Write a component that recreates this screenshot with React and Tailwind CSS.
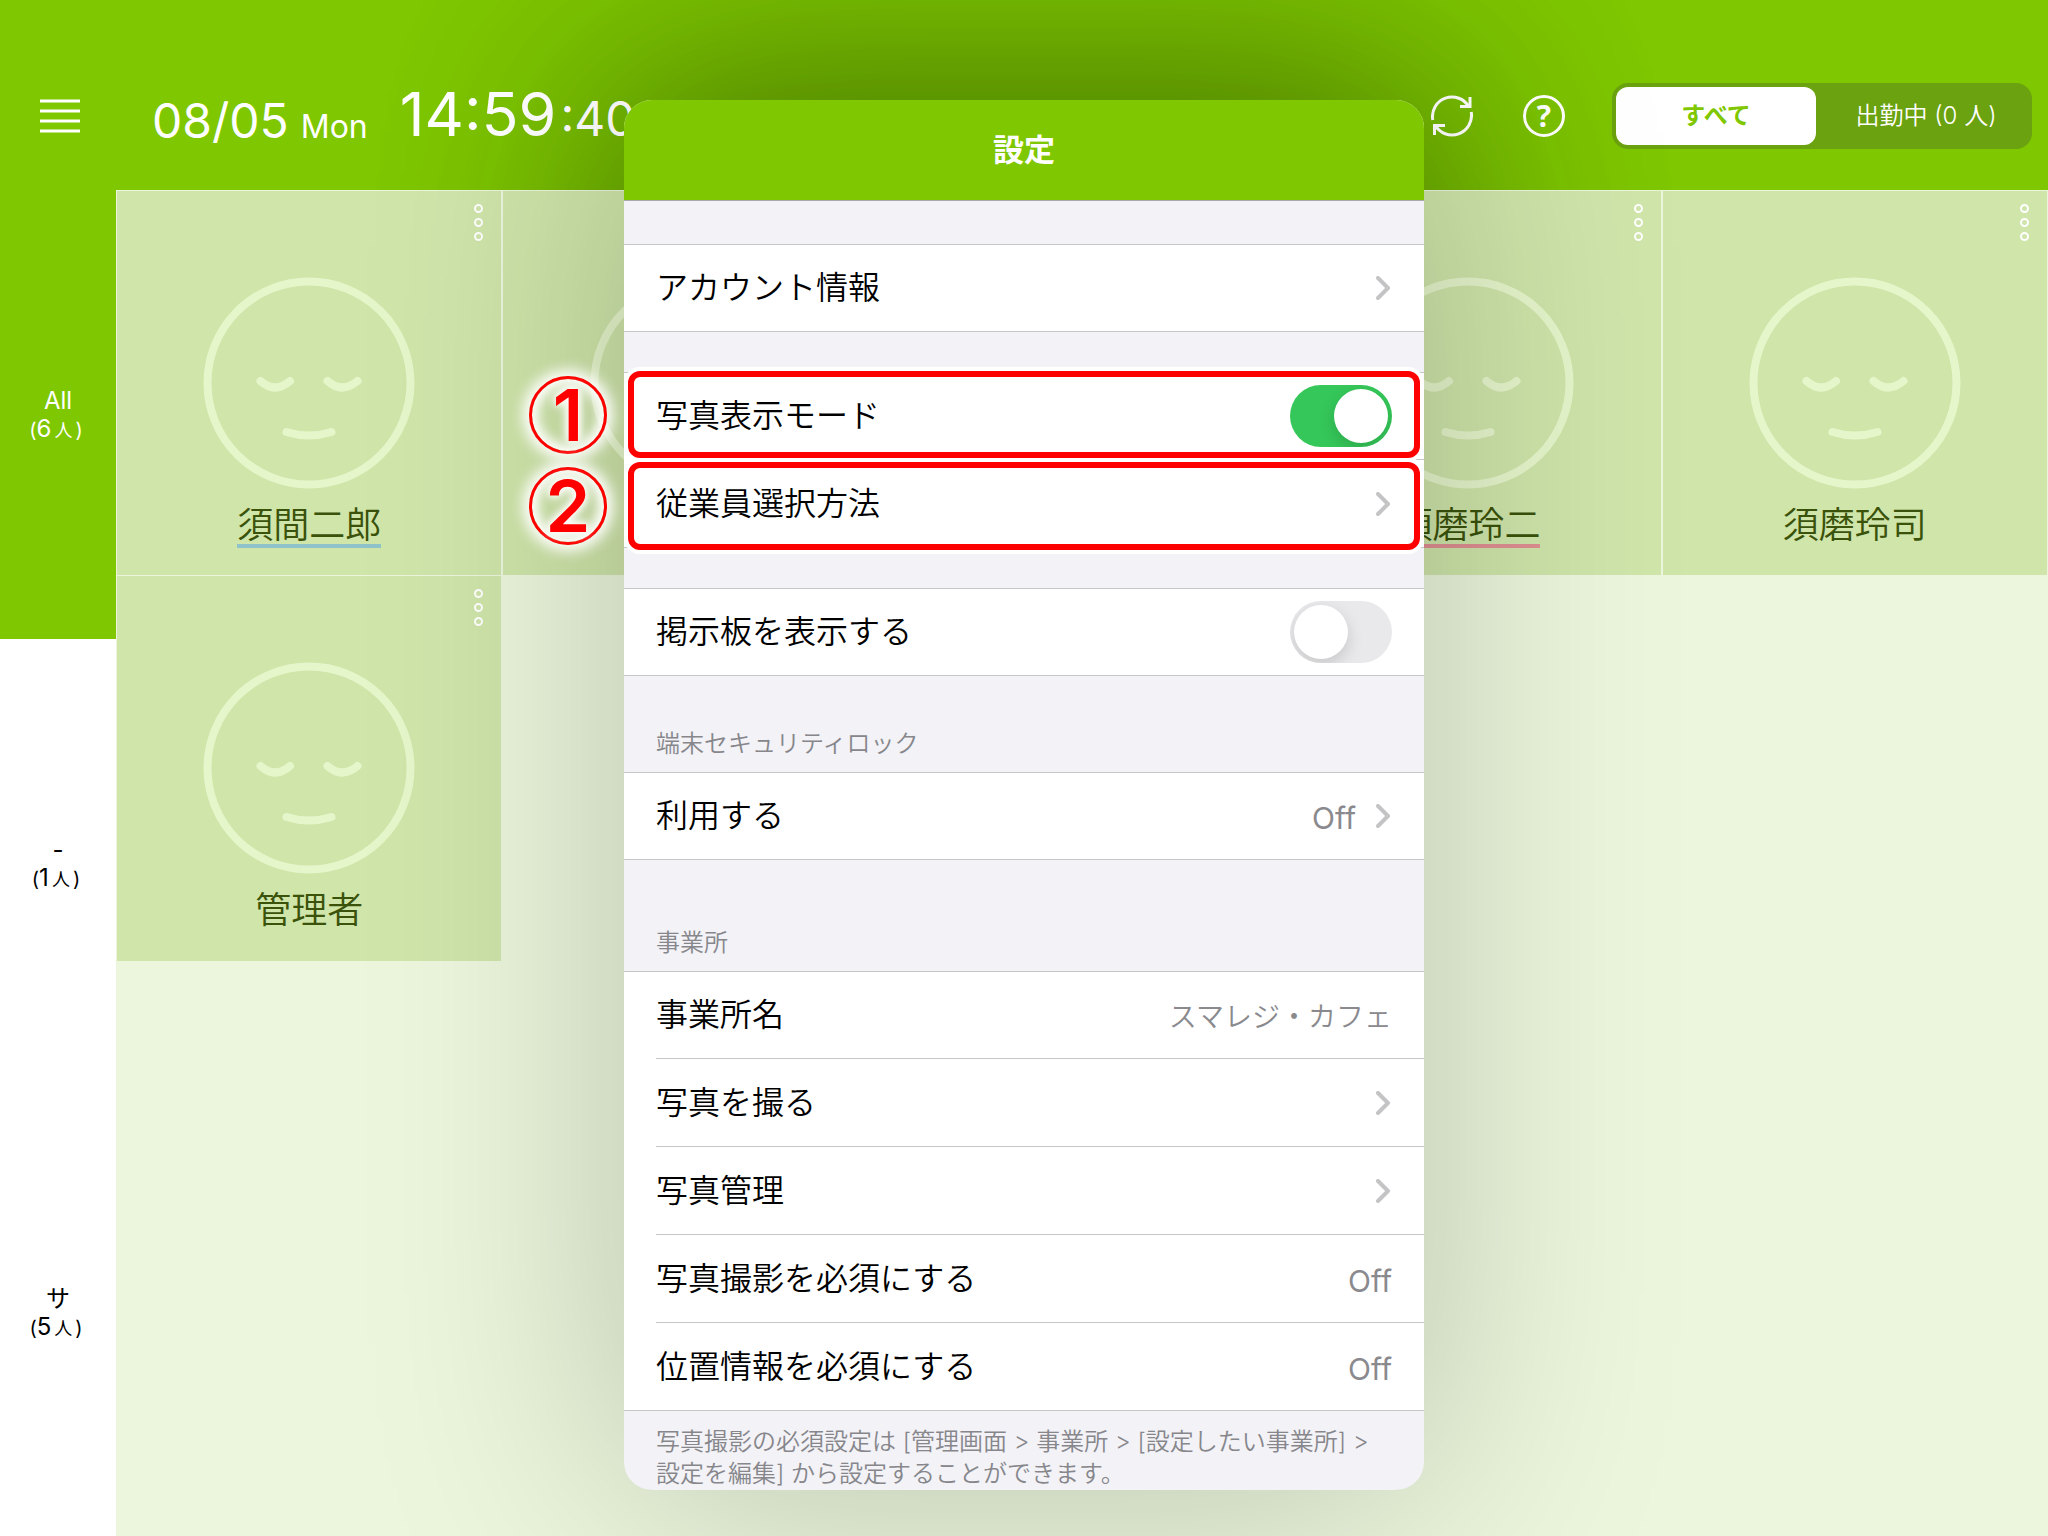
import clsx from "clsx";

const sidebarItems = [
  { label: "All", count: 6, active: true },
  { label: "-", count: 1 },
  { label: "サ", count: 5 },
];

const employees = [
  { name: "須間二郎", line: "border-[#8dc3c9]" },
  { name: "" },
  { name: "" },
  { name: "須磨玲二", line: "border-[#df8f91]" },
  { name: "須磨玲司" },
  { name: "管理者" },
];

const MenuIcon = () => (
  <svg viewBox="0 0 40 34" className="w-10" stroke="currentColor" strokeWidth="3">
    <path d="M0 2h40M0 12h40M0 22h40M0 32h40" />
  </svg>
);

const RefreshIcon = () => (
  <svg
    viewBox="0 0 42 42"
    className="w-[42px]"
    fill="none"
    stroke="currentColor"
    strokeWidth="3"
  >
    <path d="M1.8 25A19.500 19.500 0 0 1 38 12" />
    <path d="M40.200 17A19.500 19.500 0 0 1 4 30" />
    <path d="M39 2v9.500H29" />
    <path d="M3.500 40V30.500H14" />
  </svg>
);

const HelpIcon = () => (
  <span className="flex size-[42px] items-center justify-center rounded-full border-3 font-['Open_Sans',sans-serif] text-3xl font-bold">
    ?
  </span>
);

const Chevron = () => (
  <svg
    viewBox="0 0 16 24"
    className="h-6 w-4"
    fill="none"
    stroke="#c4c4c6"
    strokeWidth="4"
    strokeLinecap="round"
    strokeLinejoin="round"
  >
    <path d="M2 2l10 10L2 22" />
  </svg>
);

const Face = () => (
  <svg
    viewBox="-106 -106 212 212"
    className="w-[212px]"
    fill="none"
    stroke="#e6f6cb"
    strokeWidth="8"
    strokeLinecap="round"
  >
    <circle r="101.500" />
    <path d="M-48.500 -2Q-34 11 -19 -2M18.500 -2Q33 11 48.500 -2" />
    <path d="M-22.500 49Q0 56 22.500 49" />
  </svg>
);

const SidebarItem = ({ label, count, active }) => (
  <button
    className={clsx(
      "flex flex-1 flex-col items-center justify-center pt-1 text-2xl leading-[28px]",
      active ? "bg-[#7fc700] text-white" : "bg-white text-black"
    )}
  >
    <span>{label}</span>
    <span className="pr-1">
      <span className="text-xl">(</span>
      {count}
      <span className="px-[3px] text-lg">人</span>
      <span className="text-xl">)</span>
    </span>
  </button>
);

const EmployeeTile = ({ name, line }) => (
  <div className="relative flex aspect-square flex-col items-center bg-[#cfe5aa] pt-[86px]">
    <button
      aria-label="メニュー"
      className="absolute top-[13px] right-[18px] flex flex-col gap-[5px]"
    >
      <span className="size-[9px] rounded-full border-2 border-white" />
      <span className="size-[9px] rounded-full border-2 border-white" />
      <span className="size-[9px] rounded-full border-2 border-white" />
    </button>
    <Face />
    <span
      className={clsx(
        "mt-[18px] border-b-4 text-4xl leading-[37px] font-[350] text-[#3a5209]",
        line || "border-transparent"
      )}
    >
      {name}
    </span>
  </div>
);

const Header = () => (
  <header className="relative flex h-[190px] items-center overflow-hidden bg-[#7fc700] pt-[41px] pr-4 pl-10 text-white">
    <div className="absolute top-[100px] left-1/2 h-[1390px] w-[800px] -translate-x-1/2 rounded-[28px] shadow-[0_0_220px_24px_rgba(0,30,0,0.3)]" />
    <div className="relative flex w-full items-center">
      <button aria-label="メニュー">
        <MenuIcon />
      </button>
      <div className="ml-[72px] flex items-baseline gap-3 pt-[11px]">
        <span className="text-[48px] leading-[60px]">08/05</span>
        <span className="text-[32px]">Mon</span>
      </div>
      <div className="ml-8 flex items-baseline gap-1 pt-1">
        <span className="text-[61px] leading-[66px]">14:59</span>
        <span className="text-[48px]">:40</span>
      </div>
      <div className="ml-auto flex items-center">
        <button aria-label="更新">
          <RefreshIcon />
        </button>
        <button aria-label="ヘルプ" className="ml-[50px]">
          <HelpIcon />
        </button>
        <div className="ml-[47px] flex h-[66px] w-[420px] rounded-2xl bg-[#6ba20f] p-1 text-2xl">
          <button className="w-[200px] rounded-xl bg-white font-bold text-[#7fc700]">
            すべて
          </button>
          <button className="flex-1 pl-2 font-[350]">出勤中 (0 人)</button>
        </div>
      </div>
    </div>
  </header>
);

// numbered callout drawn around a row
const Callout = ({ number, className }) => (
  <div
    className={clsx(
      "pointer-events-none absolute inset-x-1 z-10 flex items-center rounded-xl border-6 border-[#ff0000] shadow-[0_0_0_4px_#fff,inset_0_0_2px_#fff]",
      className
    )}
  >
    <span className="absolute -left-[105px] flex size-[78px] items-center justify-center rounded-full border-3 border-[#ff0000] text-7xl font-semibold text-[#ff0000] shadow-[0_0_14px_6px_#fff,inset_0_0_12px_6px_#fff] [text-shadow:0_0_6px_#fff,0_0_12px_#fff,0_0_12px_#fff]">
      {number}
    </span>
  </div>
);

const Row = ({ children, callout }) => (
  <li className="group relative h-22 border-[#c6c6c8] bg-white pl-8 first:border-t last:border-b">
    <div className="h-full border-b border-[#c6c6c8] pr-8 group-last:border-b-0">
      {children}
    </div>
    {callout}
  </li>
);

const LinkRow = ({ label, value, callout }) => (
  <Row callout={callout}>
    <button className="flex h-full w-full items-center">
      <span>{label}</span>
      <span className="mt-1 mr-5 ml-auto text-3xl font-normal text-[#8a8a8e]">
        {value}
      </span>
      <Chevron />
    </button>
  </Row>
);

const ValueRow = ({ label, value }) => (
  <Row>
    <div className="flex h-full items-center justify-between">
      <span>{label}</span>
      <span
        className={clsx(
          "mt-1 text-[#8a8a8e]",
          value === "Off" ? "text-3xl font-normal" : "text-[28px]"
        )}
      >
        {value}
      </span>
    </div>
  </Row>
);

const SwitchRow = ({ label, checked, callout }) => (
  <Row callout={callout}>
    <label className="flex h-full items-center justify-between">
      {label}
      <input
        type="checkbox"
        role="switch"
        defaultChecked={checked}
        className="h-[62px] w-[102px] appearance-none overflow-hidden rounded-full bg-[#e9e9eb] p-1 before:block before:size-[54px] before:rounded-full before:bg-white before:shadow-[0_6px_16px_rgba(0,0,0,0.15)] checked:bg-[#35c759] checked:pl-11"
      />
    </label>
  </Row>
);

const SettingsModal = () => (
  <div
    role="dialog"
    aria-label="設定"
    className="w-[800px] rounded-[28px] bg-[#f2f2f7] text-[32px] font-[350] text-black shadow-[0_0_280px_rgba(0,0,0,0.22)]"
  >
    <h1 className="flex h-[101px] items-center justify-center rounded-t-[28px] border-b border-[#a9a9ad] bg-[#7fc700] text-[31px] font-bold text-white">
      設定
    </h1>
    <ul className="mt-[43px]">
      <LinkRow label="アカウント情報" />
    </ul>
    <ul className="mt-10">
      <SwitchRow
        label="写真表示モード"
        checked
        callout={<Callout number="1" className="-top-0.5 h-[87px]" />}
      />
      <LinkRow
        label="従業員選択方法"
        callout={<Callout number="2" className="top-0.5 h-[88px]" />}
      />
    </ul>
    <ul className="mt-10">
      <SwitchRow label="掲示板を表示する" />
    </ul>
    <h2 className="flex h-24 items-end px-8 pb-3 text-2xl text-[#86868b]">
      端末セキュリティロック
    </h2>
    <ul>
      <LinkRow label="利用する" value="Off" />
    </ul>
    <h2 className="flex h-[111px] items-end px-8 pb-3 text-2xl text-[#86868b]">
      事業所
    </h2>
    <ul>
      <ValueRow label="事業所名" value="スマレジ・カフェ" />
      <LinkRow label="写真を撮る" />
      <LinkRow label="写真管理" />
      <ValueRow label="写真撮影を必須にする" value="Off" />
      <ValueRow label="位置情報を必須にする" value="Off" />
    </ul>
    <p className="px-8 pt-[15px] text-2xl text-[#86868b]">
      写真撮影の必須設定は [管理画面 &gt; 事業所 &gt; [設定したい事業所] &gt;
      <br />
      設定を編集] から設定することができます。
    </p>
  </div>
);

export default function App() {
  return (
    <div className="relative flex min-h-screen flex-col overflow-hidden bg-[#ebf6dc] font-['Inter','Noto_Sans_CJK_JP',sans-serif]">
      <Header />
      <div className="flex flex-1">
        <nav className="flex w-29 flex-col">
          {sidebarItems.map((item) => (
            <SidebarItem key={item.label} {...item} />
          ))}
        </nav>
        <main className="grid flex-1 grid-cols-5 content-start gap-x-0.5 gap-y-px p-px">
          {employees.map((employee, i) => (
            <EmployeeTile key={i} {...employee} />
          ))}
        </main>
      </div>
      <div className="absolute inset-0 flex items-start justify-center pt-[100px]">
        <SettingsModal />
      </div>
    </div>
  );
}
